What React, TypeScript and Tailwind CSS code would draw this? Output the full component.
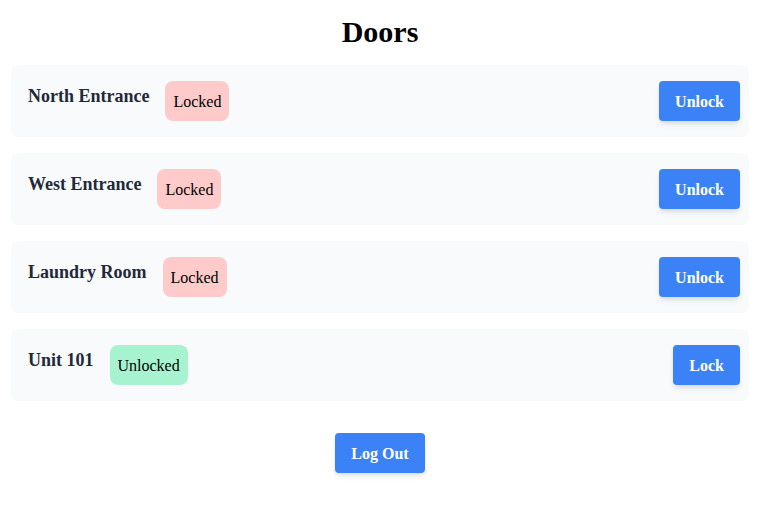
import React from "react";

const doors = [
  { name: "North Entrance", locked: true },
  { name: "West Entrance", locked: true },
  { name: "Laundry Room", locked: true },
  { name: "Unit 101", locked: false },
];

export default function App() {
  return (
    <div
      className="w-[760px] px-[11px] pt-[14px] pb-8 bg-white text-black"
      style={{ fontFamily: '"Liberation Serif", "Times New Roman", serif' }}
    >
      <h1 className="text-center text-[30px] leading-[36px] font-bold mb-[15px]">Doors</h1>
      <div className="flex flex-col gap-4">
        {doors.map((d) => (
          <div
            key={d.name}
            className="flex items-start justify-between bg-[#f9fafb] rounded-lg pl-[17px] pr-[9px] py-4"
          >
            <div className="flex items-start">
              <span className="pt-px text-[18px] leading-[28px] font-bold text-gray-800">{d.name}</span>
              <span
                className={`ml-4 px-2 pt-[9px] pb-[7px] text-[16px] leading-[24px] rounded-lg ${
                  d.locked ? "bg-[#fecaca]" : "bg-[#a7f3d0]"
                }`}
              >
                {d.locked ? "Locked" : "Unlocked"}
              </span>
            </div>
            <button className="bg-[#3b82f6] text-white font-bold text-[16px] leading-[24px] px-4 pt-[9px] pb-[7px] rounded shadow-md">
              {d.locked ? "Unlock" : "Lock"}
            </button>
          </div>
        ))}
      </div>
      <div className="flex justify-center mt-8">
        <button className="bg-[#3b82f6] text-white font-bold text-[16px] leading-[24px] px-4 pt-[9px] pb-[7px] rounded shadow-md">
          Log Out
        </button>
      </div>
    </div>
  );
}
